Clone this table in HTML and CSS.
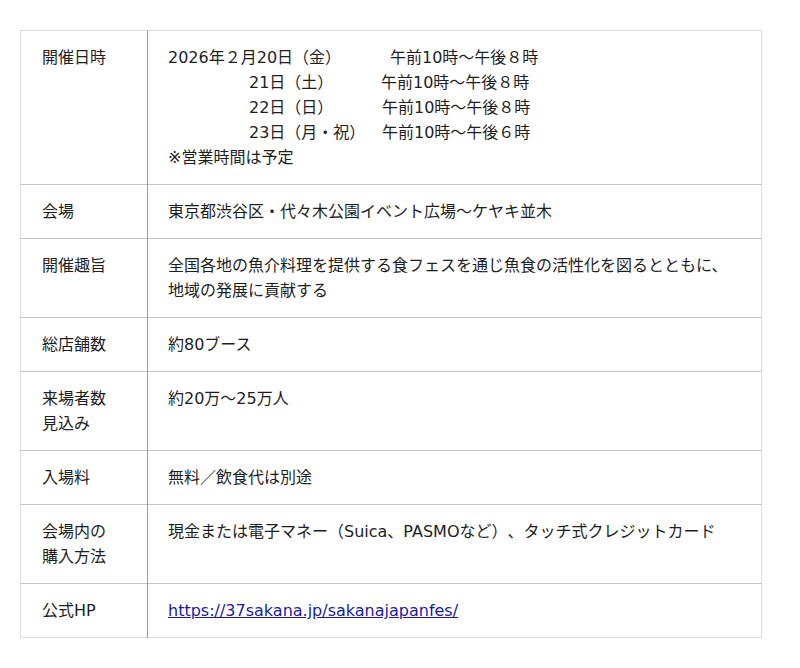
FILE: index.html
```html
<!DOCTYPE html>
<html lang="ja">
<head>
<meta charset="utf-8">
<title>開催概要</title>
<link rel="stylesheet" href="styles.css">
</head>
<body>
<div class="page">
<table class="info">
  <tr>
    <th>開催日時</th>
    <td>
      <div class="line"><span class="date first">2026年２月20日（金）</span><span>午前10時〜午後８時</span></div>
      <div class="line indent"><span class="date d2">21日（土）</span><span>午前10時〜午後８時</span></div>
      <div class="line indent"><span class="date d3">22日（日）</span><span>午前10時〜午後８時</span></div>
      <div class="line indent"><span class="date d3">23日（月・祝）</span><span>午前10時〜午後６時</span></div>
      <div class="line">※営業時間は予定</div>
    </td>
  </tr>
  <tr>
    <th>会場</th>
    <td>東京都渋谷区・代々木公園イベント広場〜ケヤキ並木</td>
  </tr>
  <tr>
    <th>開催趣旨</th>
    <td>全国各地の魚介料理を提供する食フェスを通じ魚食の活性化を図るとともに、<br>地域の発展に貢献する</td>
  </tr>
  <tr>
    <th>総店舗数</th>
    <td>約80ブース</td>
  </tr>
  <tr>
    <th>来場者数<br>見込み</th>
    <td>約20万〜25万人</td>
  </tr>
  <tr>
    <th>入場料</th>
    <td>無料／飲食代は別途</td>
  </tr>
  <tr>
    <th>会場内の<br>購入方法</th>
    <td>現金または電子マネー（Suica、PASMOなど）、タッチ式クレジットカード</td>
  </tr>
  <tr>
    <th>公式HP</th>
    <td><a href="#">https://37sakana.jp/sakanajapanfes/</a></td>
  </tr>
</table>
</div>
</body>
</html>
```
FILE: styles.css
```css
html, body {
  margin: 0;
  padding: 0;
  background: #ffffff;
}
.page {
  padding: 30px 0 0 20px;
}
.info {
  width: 742px;
  border-collapse: collapse;
  border: 1px solid #dddddd;
  font-family: "DejaVu Sans", "Noto Sans CJK JP", sans-serif;
  font-size: 16px;
  line-height: 25px;
  color: #1e1e1e;
  text-spacing-trim: space-all;
}
.info tr {
  border-top: 1px solid #c4c4c4;
}
.info tr:first-child {
  border-top: none;
}
.info th {
  width: 127px;
  box-sizing: border-box;
  text-align: left;
  font-weight: normal;
  vertical-align: top;
  padding: 14px 10px 14px 21px;
  border-right: 1px solid #9a9a9a;
}
.info td {
  vertical-align: top;
  padding: 14px 10px 14px 20px;
}
.line {
  white-space: nowrap;
}
.indent {
  padding-left: 81px;
}
.date {
  display: inline-block;
}
.first {
  width: 222px;
}
.d2 {
  width: 132px;
}
.d3 {
  width: 133px;
}
.info a {
  color: #1a1a9e;
  text-decoration: underline;
}
```
